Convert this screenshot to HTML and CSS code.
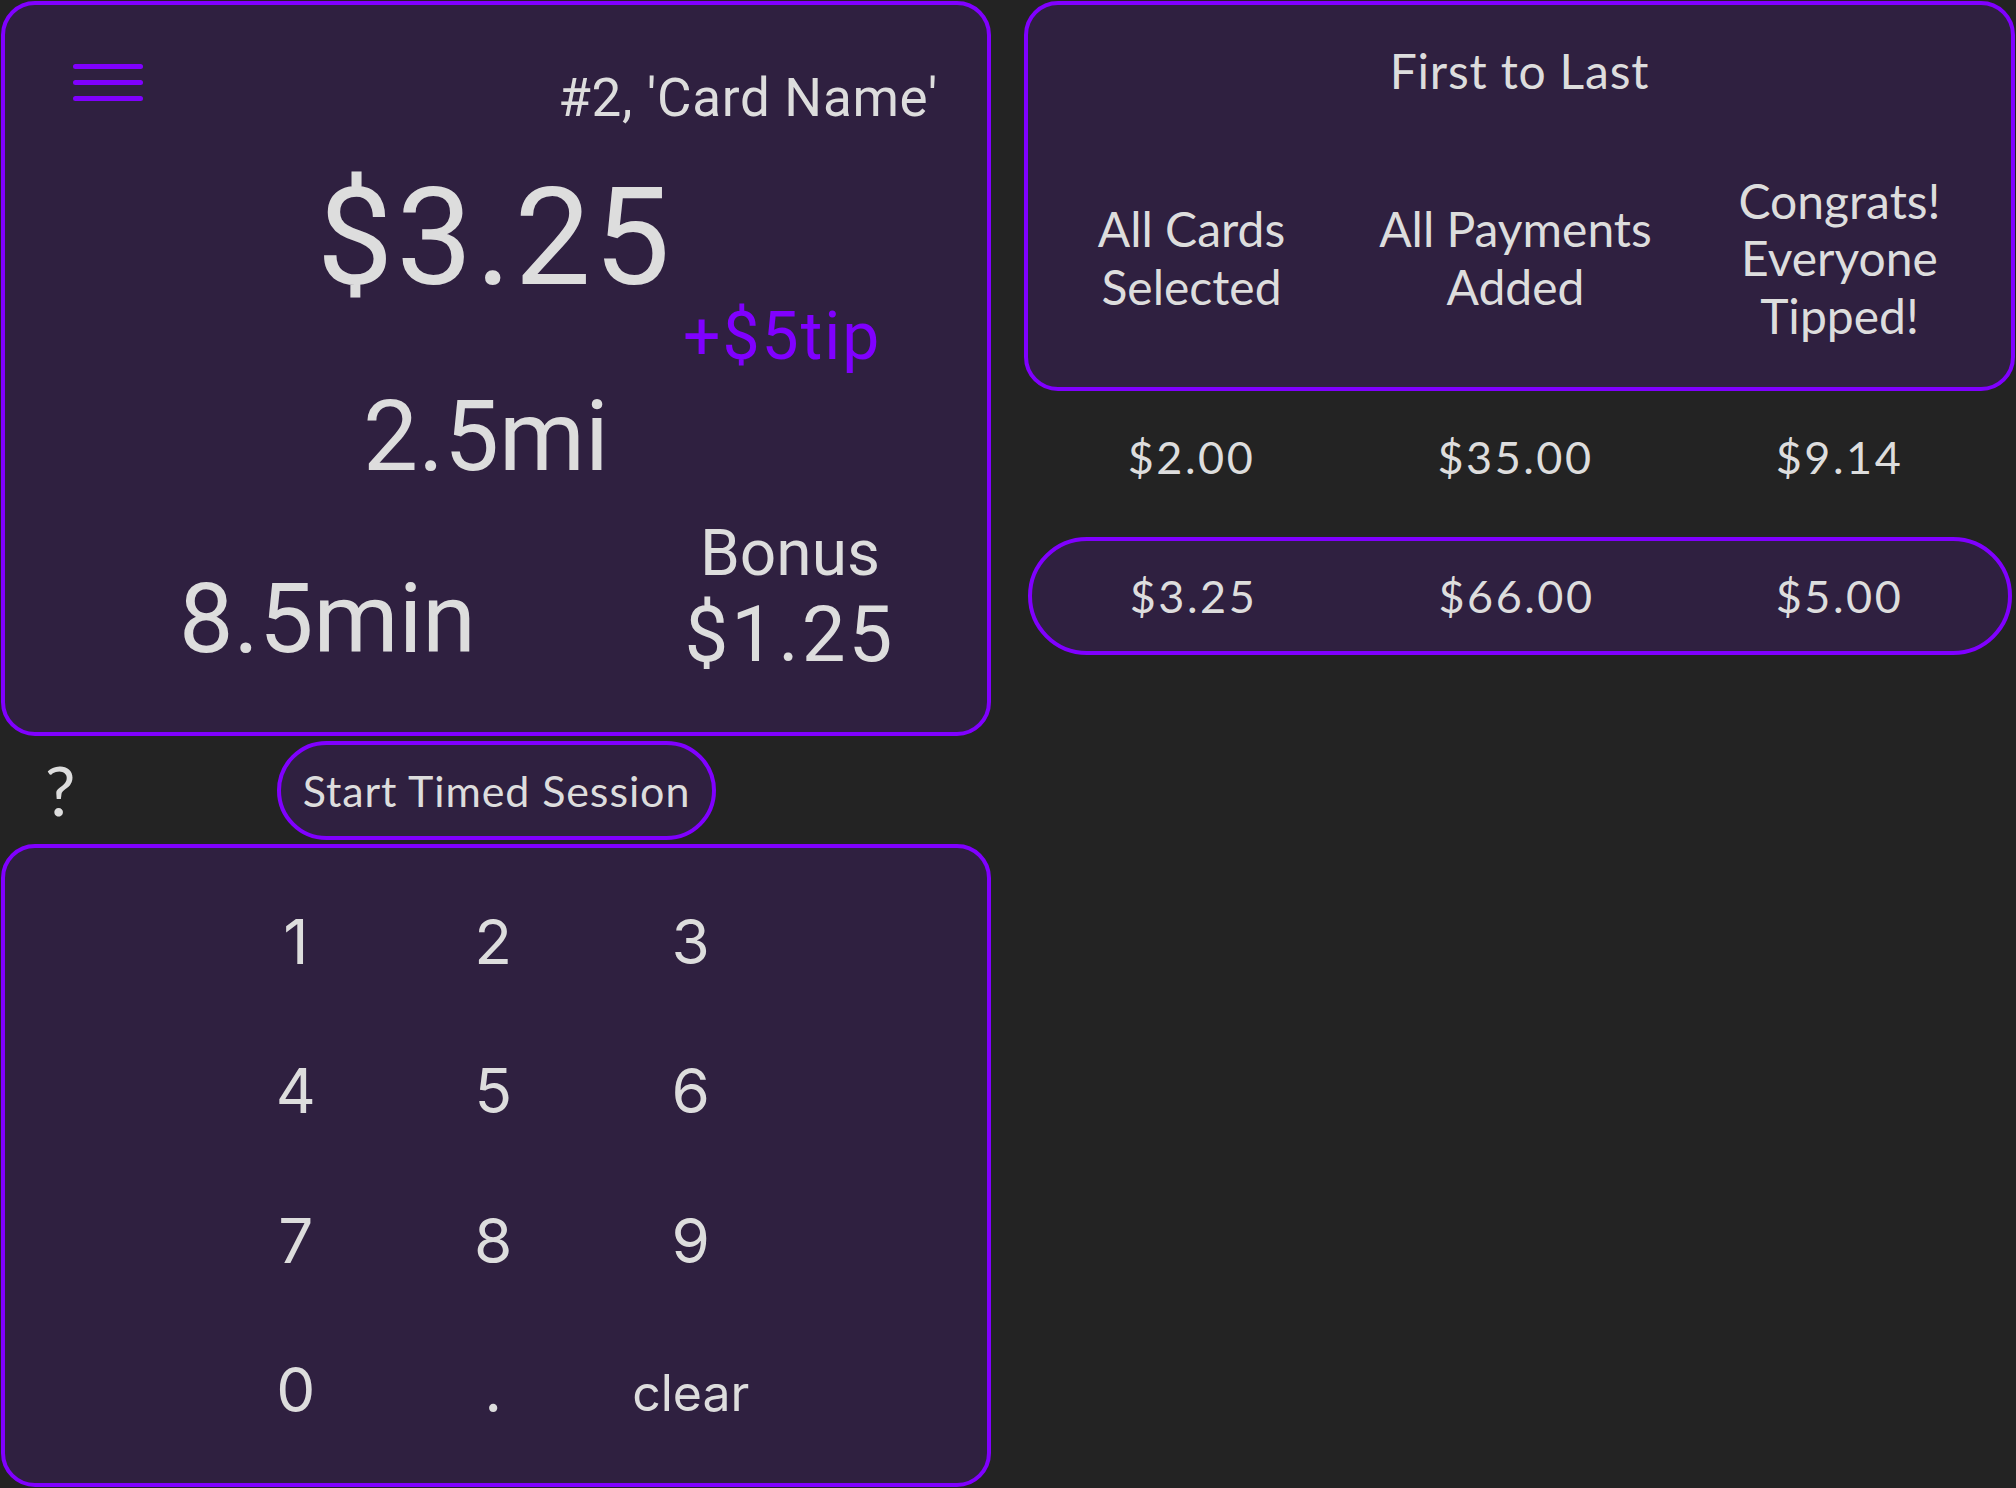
FILE: index.html
```html
<!DOCTYPE html>
<html lang="en">
<head>
<meta charset="utf-8">
<title>Card Pay</title>
<link rel="stylesheet" href="styles.css">
</head>
<body>
<div class="app">
  <div class="col-left">
    <section class="card summary">
      <div class="summary-head">
        <svg class="menu" width="70" height="37" viewBox="0 0 70 37" aria-label="menu">
          <line x1="2.5" y1="2.5" x2="67.5" y2="2.5"/>
          <line x1="2.5" y1="18.5" x2="67.5" y2="18.5"/>
          <line x1="2.5" y1="34.5" x2="67.5" y2="34.5"/>
        </svg>
        <div class="card-title">#2, 'Card Name'</div>
      </div>
      <div class="pay">$3.25</div>
      <div class="tip">+$5tip</div>
      <div class="dist">2.5mi</div>
      <div class="summary-foot">
        <div class="time">8.5min</div>
        <div class="bonus">
          <div class="bonus-label">Bonus</div>
          <div class="bonus-value">$1.25</div>
        </div>
      </div>
    </section>
    <div class="actions">
      <span class="help">?</span>
      <button class="session">Start Timed Session</button>
    </div>
    <section class="card keypad">
      <div class="key">1</div><div class="key">2</div><div class="key">3</div>
      <div class="key">4</div><div class="key">5</div><div class="key">6</div>
      <div class="key">7</div><div class="key">8</div><div class="key">9</div>
      <div class="key">0</div><div class="key">.</div><div class="key key-small">clear</div>
    </section>
  </div>
  <div class="col-right">
    <section class="card stats-head">
      <div class="stats-title">First to Last</div>
      <div class="stats-cols">
        <div class="stats-label">All Cards<br>Selected</div>
        <div class="stats-label">All Payments<br>Added</div>
        <div class="stats-label">Congrats!<br>Everyone<br>Tipped!</div>
      </div>
    </section>
    <div class="stats-row">
      <div class="stat">$2.00</div>
      <div class="stat">$35.00</div>
      <div class="stat">$9.14</div>
    </div>
    <div class="stats-row current">
      <div class="stat">$3.25</div>
      <div class="stat">$66.00</div>
      <div class="stat">$5.00</div>
    </div>
  </div>
</div>
</body>
</html>
```

FILE: styles.css
```css
* { box-sizing: border-box; }

html, body {
  margin: 0;
  padding: 0;
  background: #232323;
}

body {
  width: 2016px;
  height: 1488px;
  overflow: hidden;
  color: #dddddd;
  font-family: "Roboto", "Liberation Sans", sans-serif;
}

.app {
  display: grid;
  grid-template-columns: 990px 991px;
  column-gap: 33px;
  padding: 1px 1px 0 1px;
  height: 1488px;
}

.card {
  background: #2f2040;
  border: 4px solid #8000ff;
  border-radius: 34px;
}

/* ---------- left column ---------- */
.col-left {
  display: flex;
  flex-direction: column;
}

.summary {
  height: 735px;
  padding-top: 59px;
}

.summary-head {
  display: flex;
  justify-content: space-between;
  align-items: flex-start;
  padding: 0 49px 0 68px;
}

.menu {
  display: block;
  stroke: #8000ff;
  stroke-width: 5;
  stroke-linecap: round;
}

.card-title {
  margin-top: 8px;
  font-size: 53px;
  line-height: 1;
  letter-spacing: 0.7px;
}

.pay {
  margin-top: 45px;
  font-size: 136px;
  line-height: 1;
  letter-spacing: 3px;
  text-align: center;
  padding-right: 2px;
}

.tip {
  margin-top: -2px;
  padding-left: 678px;
  font-size: 66px;
  line-height: 1;
  letter-spacing: 2px;
  color: #8000ff;
}

.dist {
  margin-top: 18px;
  padding-right: 20px;
  font-size: 98px;
  line-height: 1;
  text-align: center;
}

.summary-foot {
  display: flex;
  align-items: flex-start;
  padding-left: 174px;
}

.time {
  margin-top: 85px;
  font-size: 97px;
  line-height: 1;
}

.bonus {
  margin-left: auto;
  margin-right: 77px;
  margin-top: 36px;
  width: 240px;
  text-align: center;
}

.bonus-label {
  font-size: 64px;
  line-height: 1;
}

.bonus-value {
  margin-top: 10px;
  font-size: 78px;
  line-height: 1;
  letter-spacing: 3px;
}

.actions {
  height: 108px;
  display: flex;
  align-items: center;
  padding-left: 44px;
  font-family: "Lato", "Open Sans", sans-serif;
}

.help {
  width: 232px;
  font-size: 68px;
  line-height: 1;
  color: #dddddd;
}

.session {
  width: 439px;
  height: 99px;
  padding: 0;
  background: #2f2040;
  border: 4px solid #8000ff;
  border-radius: 50px;
  color: #dddddd;
  font-family: "Lato", "Open Sans", sans-serif;
  font-size: 43px;
  line-height: 1;
  letter-spacing: 0.9px;
}

.keypad {
  height: 643px;
  display: grid;
  grid-template-columns: repeat(3, 197.5px);
  grid-auto-rows: 149.5px;
  padding: 18.7px 0 0 192px;
  font-family: "Inter", "Roboto", sans-serif;
}

.key {
  font-size: 62px;
  line-height: 149.5px;
  text-align: center;
}

.key-small {
  font-size: 50px;
  line-height: 156px;
}

/* ---------- right column ---------- */
.col-right {
  display: flex;
  flex-direction: column;
  font-family: "Lato", "Open Sans", sans-serif;
}

.stats-head {
  height: 390px;
  padding-top: 36.5px;
}

.stats-title {
  font-size: 48px;
  line-height: 57.6px;
  text-align: center;
  letter-spacing: 0.8px;
}

.stats-cols {
  margin-top: 29.5px;
  height: 258.4px;
  display: grid;
  grid-template-columns: repeat(3, 324px);
  align-items: center;
  padding-left: 1.5px;
}

.stats-label {
  font-size: 48px;
  line-height: 57.5px;
  text-align: center;
}

.stats-row {
  display: grid;
  grid-template-columns: repeat(3, 324px);
  height: 146px;
  padding: 39px 0 0 5.5px;
}

.stat {
  font-size: 45px;
  line-height: 54px;
  text-align: center;
  letter-spacing: 2.5px;
}

.stats-row.current {
  height: 118px;
  margin: 0 3px 0 4px;
  padding: 0;
  align-items: center;
  grid-template-columns: repeat(3, 323px);
  background: #2f2040;
  border: 4px solid #8000ff;
  border-radius: 59px;
}
```
